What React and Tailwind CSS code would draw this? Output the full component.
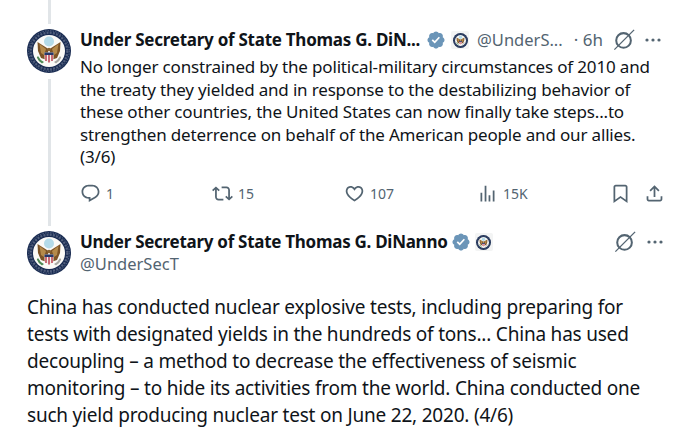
const FONT = "font-['Noto_Sans','Open_Sans',sans-serif]";

function Seal({ className }) {
  return (
    <svg viewBox="0 0 44 44" className={className}>
      <circle cx="22" cy="22" r="22" fill="#1a2c52" />
      <circle cx="22" cy="22" r="20.3" fill="none" stroke="#8f9cb3" strokeWidth="0.5" strokeDasharray="1.4 1.2" />
      <circle cx="22" cy="22" r="18.3" fill="none" stroke="#cfd5df" strokeWidth="2.2" strokeDasharray="2 1.2" opacity="0.3" />
      <circle cx="22" cy="22" r="16" fill="#fbfaf7" />
      <circle cx="22" cy="12.5" r="5" fill="#b4dbe9" />
      <path d="M21.5 20 L10.5 13 L11 22 L14 29 L20 31 Z" fill="#7c5326" />
      <path d="M22.5 20 L33.5 13 L33 22 L30 29 L24 31 Z" fill="#7c5326" />
      <path d="M12.5 15 L19 20 L17 26 L14 24 Z" fill="#b58a4a" />
      <path d="M31.5 15 L25 20 L27 26 L30 24 Z" fill="#b58a4a" />
      <path d="M17.5 23.5 H26.5 V29 Q26.5 32 22 33.5 Q17.5 32 17.5 29 Z" fill="#f4efe9" />
      <path d="M17.5 23.5 H26.5 V26 H17.5 Z" fill="#27386b" />
      <path d="M19 26 V32 M22 26 V33.5 M25 26 V32" stroke="#b3263b" strokeWidth="1.3" />
      <circle cx="22" cy="20.5" r="1.8" fill="#8a6330" />
      <path d="M11 27 Q13 31 17 33 L15 34.5 Q11 32 9.8 28.5 Z" fill="#4f8a55" />
      <path d="M33 27 Q31 31 27 33 L29 34.5 Q33 32 34.2 28.5 Z" fill="#a9a9a4" />
    </svg>
  );
}

function Icon({ d, className }) {
  return (
    <svg viewBox="0 0 24 24" className={className} fill="currentColor">
      <path d={d} />
    </svg>
  );
}

const reply = "M1.751 10c0-4.42 3.584-8 8.005-8h4.366c4.49 0 8.129 3.64 8.129 8.13 0 2.96-1.607 5.68-4.196 7.11l-8.054 4.46v-3.69h-.067c-4.49.1-8.183-3.51-8.183-8.01zm8.005-6c-3.317 0-6.005 2.69-6.005 6 0 3.37 2.77 6.08 6.138 6.01l.351-.01h1.761v2.3l5.087-2.81c1.951-1.08 3.163-3.13 3.163-5.36 0-3.39-2.744-6.13-6.129-6.13H9.756z";
const retweet = "M4.5 3.88l4.432 4.14-1.364 1.46L5.5 7.55V16c0 1.1.896 2 2 2H13v2H7.5c-2.209 0-4-1.79-4-4V7.55L1.432 9.48.068 8.02 4.5 3.88zM16.5 6H11V4h5.5c2.209 0 4 1.79 4 4v8.45l2.068-1.93 1.364 1.46-4.432 4.14-4.432-4.14 1.364-1.46 2.068 1.93V8c0-1.1-.896-2-2-2z";
const like = "M16.697 5.5c-1.222-.06-2.679.51-3.89 2.16l-.805 1.09-.806-1.09C9.984 6.01 8.526 5.44 7.304 5.5c-1.243.07-2.349.78-2.91 1.91-.552 1.12-.633 2.78.479 4.82 1.074 1.97 3.257 4.27 7.129 6.61 3.87-2.34 6.052-4.64 7.126-6.61 1.111-2.04 1.03-3.7.477-4.82-.561-1.13-1.666-1.84-2.908-1.91zm4.187 7.69c-1.351 2.48-4.001 5.12-8.379 7.67l-.503.3-.504-.3c-4.379-2.55-7.029-5.19-8.382-7.67-1.36-2.5-1.41-4.86-.514-6.67.887-1.79 2.647-2.91 4.601-3.01 1.651-.09 3.368.56 4.798 2.01 1.429-1.45 3.146-2.1 4.796-2.01 1.954.1 3.714 1.22 4.601 3.01.896 1.81.846 4.17-.514 6.67z";
const views = "M8.75 21V3h2v18h-2zM18 21V8.5h2V21h-2zM4 21l.004-10h2L6 21H4zm9.248 0v-7h2v7h-2z";
const bookmark = "M4 4.5C4 3.12 5.119 2 6.5 2h11C18.881 2 20 3.12 20 4.5v18.44l-8-5.71-8 5.71V4.5zM6.5 4c-.276 0-.5.22-.5.5v14.56l6-4.29 6 4.29V4.5c0-.28-.224-.5-.5-.5h-11z";
const share = "M12 2.59l5.7 5.7-1.41 1.42L13 6.41V16h-2V6.41l-3.3 3.3-1.41-1.42L12 2.59zM21 15l-.02 3.51c0 1.38-1.12 2.49-2.5 2.49H5.5C4.11 21 3 19.88 3 18.5V15h2v3.5c0 .28.22.5.5.5h12.98c.28 0 .5-.22.5-.5L19 15h2z";
const verified = "M22.25 12c0-1.43-.88-2.67-2.19-3.34.46-1.39.2-2.9-.81-3.91s-2.52-1.27-3.91-.81c-.66-1.31-1.91-2.19-3.34-2.19s-2.67.88-3.33 2.19c-1.4-.46-2.91-.2-3.92.81s-1.26 2.52-.8 3.91c-1.31.67-2.2 1.91-2.2 3.34s.89 2.67 2.2 3.34c-.46 1.39-.21 2.9.8 3.91s2.52 1.26 3.91.81c.67 1.31 1.91 2.19 3.34 2.19s2.68-.88 3.34-2.19c1.39.45 2.9.2 3.91-.81s1.27-2.52.81-3.91c1.31-.67 2.19-1.91 2.19-3.34zm-11.71 4.2L6.8 12.46l1.41-1.42 2.26 2.26 4.8-5.23 1.47 1.36-6.2 6.77z";

function Grok({ className }) {
  return (
    <svg viewBox="0 0 24 24" className={className} fill="none" stroke="currentColor">
      <circle cx="11.5" cy="12.5" r="8" strokeWidth="2.2" />
      <path d="M1.5 22.5 L23 1" strokeWidth="1.4" />
    </svg>
  );
}

function Dots() {
  return (
    <svg viewBox="0 0 16 4" className="w-[16px] h-[4px] text-[#536471]" fill="currentColor">
      <circle cx="2" cy="2" r="1.6" />
      <circle cx="8" cy="2" r="1.6" />
      <circle cx="14" cy="2" r="1.6" />
    </svg>
  );
}

function Badge({ className }) {
  return <Icon d={verified} className={`w-[20px] h-[20px] text-[#6b95b8] shrink-0 ${className}`} />;
}

function OrgMark() {
  return (
    <div className="w-[18px] h-[18px] shrink-0 bg-[#f3f4f4] rounded-[2px] flex items-center justify-center">
      <Seal className="w-[15px] h-[15px]" />
    </div>
  );
}

function Stat({ d, label, className }) {
  return (
    <div className={`flex items-center gap-[5px] text-[#536471] ${className}`}>
      <Icon d={d} className="w-[21px] h-[21px]" />
      <span className="text-[14px] leading-[20px]">{label}</span>
    </div>
  );
}

export default function App() {
  return (
    <div className={`w-[700px] h-[438px] overflow-hidden bg-white text-[#0f1419] ${FONT}`}>
      <div className="flex px-[27px] h-[230px]">
        <div className="w-[44px] shrink-0 flex flex-col items-center">
          <div className="w-[3px] h-[24px] bg-[#e1e5e8]" />
          <Seal className="w-[44px] h-[44px] mt-[5px] shrink-0" />
          <div className="w-[3px] flex-1 mt-[6px] mb-[4px] bg-[#e1e5e8]" />
        </div>
        <div className="ml-[9px] flex-1 min-w-0 pt-[29px]">
          <div className="flex items-center h-[22px]">
            <span className="text-[17px] font-bold tracking-[-0.26px] whitespace-nowrap">Under Secretary of State Thomas G. DiN...</span>
            <Badge className="ml-[6px]" />
            <div className="ml-[5px]"><OrgMark /></div>
            <span className="ml-[8px] text-[16.5px] text-[#536471] whitespace-nowrap">@UnderS...</span>
            <span className="ml-[11px] text-[17px] text-[#536471] whitespace-nowrap">· 6h</span>
            <Grok className="ml-[10px] w-[22px] h-[22px] text-[#536471] shrink-0" />
            <div className="ml-[10px]"><Dots /></div>
          </div>
          <p className="mt-[5px] text-[17px] leading-[22.5px] w-[590px] tracking-[-0.17px]">
            No longer constrained by the political-military circumstances of 2010 and<br />
            the treaty they yielded and in response to the destabilizing behavior of<br />
            these other countries, the United States can now finally take steps...to<br />
            strengthen deterrence on behalf of the American people and our allies.<br />
            (3/6)
          </p>
          <div className="mt-[13px] flex items-center h-[24px]">
            <Stat d={reply} label="1" className="w-[132px]" />
            <Stat d={retweet} label="15" className="w-[132px]" />
            <Stat d={like} label="107" className="w-[133px]" />
            <Stat d={views} label="15K" className="w-[133px]" />
            <Icon d={bookmark} className="w-[21px] h-[21px] text-[#536471]" />
            <Icon d={share} className="ml-[13px] w-[21px] h-[21px] text-[#536471]" />
          </div>
        </div>
      </div>
      <div className="px-[27px] pt-[1px]">
        <div className="flex">
          <Seal className="w-[44px] h-[44px] shrink-0" />
          <div className="ml-[9px] flex-1 min-w-0">
            <div className="flex items-center h-[22px]">
              <span className="text-[17px] font-bold tracking-[-0.28px] whitespace-nowrap">Under Secretary of State Thomas G. DiNanno</span>
              <Badge className="ml-[3px]" />
              <div className="ml-[4px]"><OrgMark /></div>
              <div className="flex-1" />
              <Grok className="w-[22px] h-[22px] text-[#536471] shrink-0" />
              <div className="ml-[11px] mr-[10px]"><Dots /></div>
            </div>
            <div className="text-[16.5px] leading-[22px] text-[#536471]">@UnderSecT</div>
          </div>
        </div>
        <p className="mt-[19px] text-[19px] leading-[27px] w-[646px] tracking-[-0.21px]">
          China has conducted nuclear explosive tests, including preparing for<br />
          tests with designated yields in the hundreds of tons... China has used<br />
          decoupling – a method to decrease the effectiveness of seismic<br />
          monitoring – to hide its activities from the world. China conducted one<br />
          such yield producing nuclear test on June 22, 2020. (4/6)
        </p>
      </div>
    </div>
  );
}
